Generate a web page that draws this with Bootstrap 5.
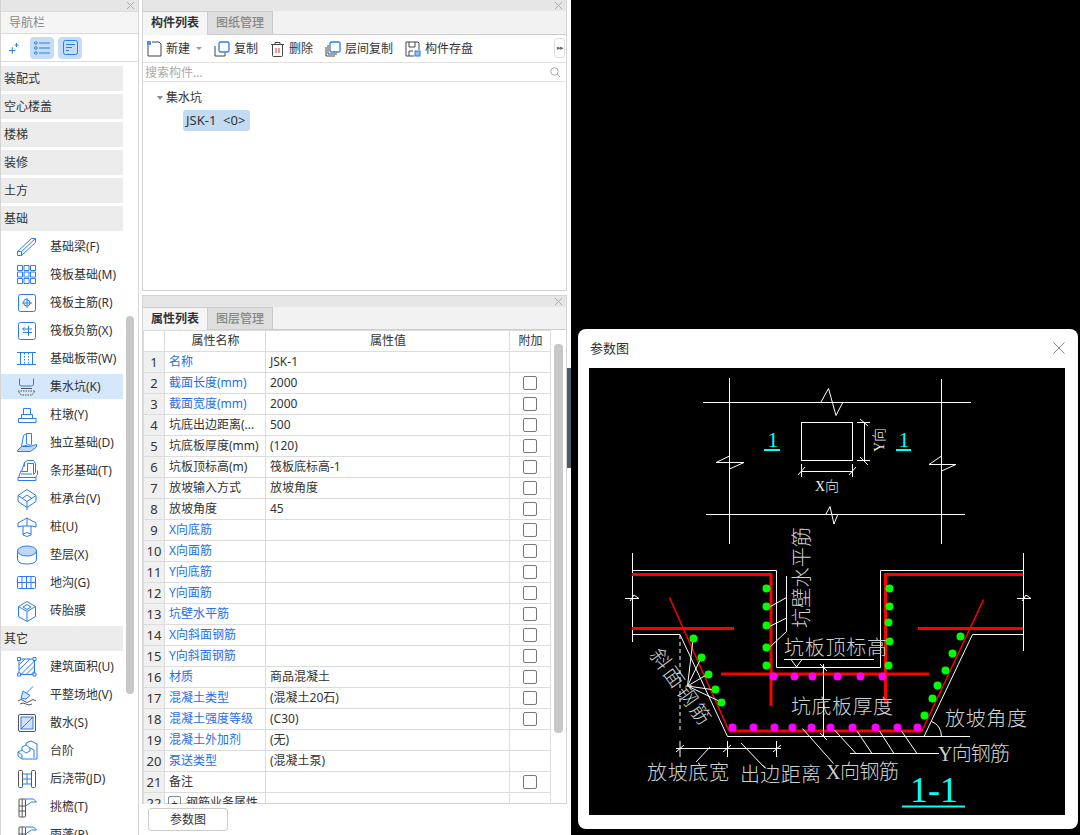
<!DOCTYPE html>
<html lang="zh-CN">
<head>
<meta charset="UTF-8">
<title>参数图</title>
<link href="https://cdn.jsdelivr.net/npm/bootstrap@5.3.0/dist/css/bootstrap.min.css" rel="stylesheet">
<script src="https://cdn.jsdelivr.net/npm/bootstrap@5.3.0/dist/js/bootstrap.bundle.min.js"></script>
<style>
html, body { height: 835px; overflow: hidden; }
body { background: #000; font-family: "Noto Sans", "Noto Sans CJK SC", sans-serif; font-size: 12px; line-height: 20px; color: #333; }
.app-shell { width: 571px; height: 835px; background: #fff; }
.nav-side { width: 139px; flex: none; border-left: 1px solid #d4d4d4; border-right: 1px solid #d4d4d4; }
.dock-bar { height: 11px; background: #e6e6e6; display: flex; justify-content: flex-end; align-items: center; padding-right: 3px; flex: none; }
.dock-bar svg { display: block; }
.nav-title { height: 23px; line-height: 22px; background: #f5f5f5; color: #888; padding-left: 8px; font-size: 12px; border-top: 1px solid #ddd; border-bottom: 1px solid #ddd; flex: none; }
.nav-tools { height: 28px; gap: 4px; padding-left: 5px; border-bottom: 1px solid #ddd; flex: none; }
.tool-toggle { width: 24px; height: 22px; display: flex; align-items: center; justify-content: center; border-radius: 4px; }
.tool-toggle.on { background: #c4dcf5; }
.nav-scroll { padding-top: 4px; }
.nav-list { width: 122px; flex: none; display: flex; flex-direction: column; gap: 3px; }
.nav-group { height: 25px; line-height: 25px; background: #ececec; padding-left: 3px; flex: none; }
.nav-link-row { height: 25px; display: flex; align-items: center; flex: none; padding-left: 14px; }
.nav-link-row svg { flex: none; margin-right: 11px; }
.nav-link-row.active-row { background: #d5e7fb; }
.nav-thumb { width: 8px; height: 378px; margin: 250px 0 0 3px; background: #c8c8c8; border-radius: 4px; flex: none; }
.dock-col { width: 425px; margin-left: 3px; flex: none; }
.dock { border: 1px solid #d4d4d4; border-top: 0; }
.dock-top { height: 291px; }
.dock-prop { height: 509px; margin-top: 4px; border-top: 1px solid #d4d4d4; }
.tab-row { height: 23px; background: #f2f2f2; border-bottom: 1px solid #ccc; flex: none; }
.tab-item { width: 65px; text-align: center; line-height: 22px; font-weight: 700; height: 23px; background: #f5f5f5; border-right: 1px solid #ccc; border-top: 1px solid #ccc; }
.tab-item.off { background: #dedede; color: #888; font-weight: 500; border-bottom: 1px solid #ccc; }
.dock-top .tab-row, .dock-top .tab-item { height: 24px; }
.comp-tools { height: 28px; padding-left: 4px; border-bottom: 1px solid #e2e2e2; position: relative; flex: none; }
.comp-tools svg { flex: none; margin-right: 4px; }
.comp-btn { display: flex; align-items: center; margin-right: 12px; white-space: nowrap; }
.comp-tools .first-btn svg { margin-right: 3px; }
.drop-caret { width: 0; height: 0; border-left: 3px solid transparent; border-right: 3px solid transparent; border-top: 3px solid #999; margin-left: 6px; }
.more-btn { position: absolute; right: 1px; top: 3px; width: 11px; height: 20px; border: 1px solid #e0e0e0; border-radius: 3px; color: #666; font-size: 7px; line-height: 18px; text-align: center; letter-spacing: -1px; }
.search-row { height: 19px; padding: 1px 5px 0 2px; border-bottom: 1px solid #e2e2e2; color: #aaa; line-height: 18px; flex: none; }
.tree-pane { padding: 6px 0 0 14px; }
.tree-caret { width: 0; height: 0; border-left: 3.5px solid transparent; border-right: 3.5px solid transparent; border-top: 4px solid #888; margin-right: 3px; }
.tree-chip { margin: 2px 0 0 26px; width: 67px; height: 21px; line-height: 21px; background: #c2daf2; border-radius: 3px; padding-left: 3px; white-space: pre; font-size: 13px; }
.prop-wrap { height: 474px; overflow: hidden; flex: none; }
.prop-body { width: 407px; flex: none; overflow: hidden; height: 474px; }
.prop-gutter { flex: 1; border-left: 1px solid #e0e0e0; }
.prop-thumb { width: 9px; height: 389px; margin: 14px 0 0 3px; background: #c8c8c8; border-radius: 4px; }
.prop-grid { table-layout: fixed; width: 407px; --bs-table-border-color: #dcdcdc; color: #333; }
.prop-grid > tbody > tr > td, .prop-grid > thead > tr > th { height: 21px; padding: 0 3px 0 4px; line-height: 20px; font-size: 12px; font-weight: 400; white-space: nowrap; overflow: hidden; vertical-align: middle; border-color: #dcdcdc; }
.prop-grid > thead > tr > th { text-align: center; }
.prop-grid > tbody > tr > td.row-no { background: #f0f0f0; text-align: center; padding: 0; font-size: 13px; }
.prop-grid > tbody > tr > td.blue-name { color: #2470e8; }
.prop-grid > tbody > tr > td.check-cell { text-align: center; padding: 0; }
.prop-check { width: 14px; height: 14px; border: 1px solid #777; border-radius: 2px; display: block; margin: 0 auto; }
.plus-box { display: inline-flex; width: 13px; height: 13px; border: 1px solid #888; border-radius: 2px; align-items: center; justify-content: center; line-height: 1; margin: 0 5px 0 -1px; font-size: 11px; }
.param-btn { width: 80px; height: 23px; margin: 4px 0 0 6px; border: 1px solid #ccc; border-radius: 3px; background: #fff; font-size: 12px; padding: 0; color: #333; line-height: 21px; }
.side-handle { position: absolute; left: 567px; top: 368px; width: 4px; height: 100px; background: #505a66; }
.param-window { position: absolute; left: 578px; top: 329px; width: 500px; height: 500px; background: #fff; border-radius: 8px; }
.param-head { height: 39px; padding: 0 13px 1px 12px; font-size: 13px; color: #333; }
.param-canvas { display: block; margin-left: 11px; background: #000; }
.cad-text { font-family: "Liberation Serif", "Noto Sans CJK SC", serif; font-weight: 300; fill: #cdd3d3; font-size: 20px; }
.cad-small { font-size: 14px; fill: #eee; }
.cad-cyan { font-family: "Liberation Serif", serif; fill: #0ff; }
</style>
</head>
<body>
<div class="app-shell d-flex">
  <div class="nav-side d-flex flex-column">
    <div class="dock-bar"><svg width="9" height="9" viewBox="0 0 9 9"><path d="M1 1l7 7M8 1L1 8" stroke="#aaa" fill="none"/></svg></div>
    <div class="nav-title">导航栏</div>
    <div class="nav-tools d-flex align-items-center">
      <svg width="16" height="16" viewBox="0 0 16 16" class="me-1"><path d="M3 10.500h6.500M6.300 7.200v6.500M8.500 5h4M10.500 3v4" stroke="#2b7de9" fill="none"/></svg>
      <div class="tool-toggle on"><svg width="16" height="14" viewBox="0 0 16 14"><circle cx="1.800" cy="2" r="1.300" fill="none" stroke="#2b7de9"/><circle cx="1.800" cy="7" r="1.300" fill="none" stroke="#2b7de9"/><circle cx="1.800" cy="12" r="1.300" fill="none" stroke="#2b7de9"/><path d="M5 2h11M5 7h11M5 12h11" stroke="#2b7de9"/></svg></div>
      <div class="tool-toggle on"><svg width="15" height="15" viewBox="0 0 15 15"><rect x=".5" y=".5" width="14" height="14" rx="2" fill="none" stroke="#2b7de9"/><path d="M3 4.500h9M3 7.500h6M3 10.500h3" stroke="#2b7de9"/></svg></div>
    </div>
    <div class="nav-scroll d-flex flex-grow-1 overflow-hidden">
      <div class="nav-list">
        <div class="nav-group">装配式</div>
        <div class="nav-group">空心楼盖</div>
        <div class="nav-group">楼梯</div>
        <div class="nav-group">装修</div>
        <div class="nav-group">土方</div>
        <div class="nav-group">基础</div>
        <div class="nav-link-row"><svg width="24" height="24" viewBox="0 0 24 24" fill="none" stroke="#2b7de9"><path d="M2.500 16.500L16.500 3.500H20.500V7.500L6.500 20.500H2.500ZM6.500 20.500V16.500L20.500 3.500M2.500 16.500H6.500"/></svg>基础梁(F)</div>
        <div class="nav-link-row"><svg width="24" height="24" viewBox="0 0 24 24" fill="none" stroke="#2b7de9"><path d="M2.500 2.500h5v5h-5zM9 2.500h5v5H9zM15.500 2.500h5v5h-5zM2.500 9h5v5h-5zM9 9h5v5H9zM15.500 9h5v5h-5zM2.500 15.500h5v5h-5zM9 15.500h5v5H9zM15.500 15.500h5v5h-5z"/></svg>筏板基础(M)</div>
        <div class="nav-link-row"><svg width="24" height="24" viewBox="0 0 24 24" fill="none" stroke="#2b7de9"><rect x="3.500" y="3.500" width="17" height="17" rx="2"/><path d="M12 7v10M12 8a3.500 3.500 0 1 0 0 7M12 9a3 3 0 1 1 0 6M7 12h10"/></svg>筏板主筋(R)</div>
        <div class="nav-link-row"><svg width="24" height="24" viewBox="0 0 24 24" fill="none" stroke="#2b7de9"><rect x="3.500" y="3.500" width="17" height="17" rx="2"/><path d="M13.500 7v10M8 10h9M8 13.500h9M9.500 8.500L7.500 10l2 1.500"/></svg>筏板负筋(X)</div>
        <div class="nav-link-row"><svg width="24" height="24" viewBox="0 0 24 24" fill="none" stroke="#2b7de9"><path d="M2 5.500h19M2 17.500h19M5.500 5.500v12M17.500 5.500v12"/><path d="M9.500 6v11M13.500 6v11" stroke-dasharray="1.500 1.500"/></svg>基础板带(W)</div>
        <div class="nav-link-row active-row"><svg width="24" height="24" viewBox="0 0 24 24" fill="none" stroke="#2b7de9"><path d="M4.500 3.500v5.500q0 2 2 2h10q2 0 2-2V3.500"/><path d="M6 13.500h11" stroke="#555"/><path d="M3 16h17l-3 4H6z" stroke="#555" stroke-dasharray="1.500 1"/></svg>集水坑(K)</div>
        <div class="nav-link-row"><svg width="24" height="24" viewBox="0 0 24 24" fill="none" stroke="#2b7de9"><path d="M8.500 5.500h7v6h-7zM6.500 11.500h11v4h-11zM3.500 15.500h17.500v4H3.500z"/></svg>柱墩(Y)</div>
        <div class="nav-link-row"><svg width="24" height="24" viewBox="0 0 24 24" fill="none" stroke="#2b7de9"><path d="M8.500 4.500l3-2h5v11l-3 2h-7z"/><path d="M11.500 3v10M6.500 15.500l8-2"/><path d="M2.500 19.500l4-4h8l7-2v2.500l-6 4.500H2.500z" fill="#bcd7f7"/></svg>独立基础(D)</div>
        <div class="nav-link-row"><svg width="24" height="24" viewBox="0 0 24 24" fill="none" stroke="#2b7de9"><path d="M9.500 3.500l3-2h6l2 3v9l-2 2v-11h-6v8h-6z"/><path d="M9.500 3.500v4M18.500 4.500h-6"/><path d="M6 11.500L3.500 18.500h17l2-3v-4"/><path d="M3 18.500h18v3H3z"/><path d="M6 15h11"/></svg>条形基础(T)</div>
        <div class="nav-link-row"><svg width="24" height="24" viewBox="0 0 24 24" fill="none" stroke="#2b7de9"><path d="M12 2.500l9 6v6l-9 6-9-6v-6zM3 8.500l9 6 9-6M12 14.500V23"/><path d="M7 11.500l5-3.500 5 3.500"/></svg>桩承台(V)</div>
        <div class="nav-link-row"><svg width="24" height="24" viewBox="0 0 24 24" fill="none" stroke="#2b7de9"><path d="M3 8l9-5 9 5v4l-4-1H7l-4 1zM12 3v8"/><path d="M8 11v9q4 3 8 0v-9M8 19q4-3 8 0"/></svg>桩(U)</div>
        <div class="nav-link-row"><svg width="24" height="24" viewBox="0 0 24 24" fill="none" stroke="#2b7de9"><ellipse cx="12" cy="8" rx="9.500" ry="5" fill="#bcd7f7"/><path d="M2.500 8v8q0 5 9.500 5t9.500-5V8"/></svg>垫层(X)</div>
        <div class="nav-link-row"><svg width="24" height="24" viewBox="0 0 24 24" fill="none" stroke="#2b7de9"><rect x="2.500" y="5.500" width="18" height="12" rx="1"/><path d="M2.500 11.500h18M7 5.500v12M11.500 5.500v12M16 5.500v12"/></svg>地沟(G)</div>
        <div class="nav-link-row"><svg width="24" height="24" viewBox="0 0 24 24" fill="none" stroke="#2b7de9"><path d="M12 2.500l8.500 5v10l-8.500 5-8.500-5v-10zM3.500 7.500l8.500 5 8.500-5M12 12.500v10"/><path d="M8 8l4-2.500L16 8l-4 2.500z"/></svg>砖胎膜</div>
        <div class="nav-group">其它</div>
        <div class="nav-link-row"><svg width="24" height="24" viewBox="0 0 24 24" fill="none" stroke="#2b7de9"><rect x="4" y="4" width="15.500" height="15.500"/><path d="M4 10l6-6M4 15l11-11M6 19.500l13.500-13.500M11 19.500l8.500-8.500M16 19.500l3.500-3.500"/><path d="M2.500 2.500h3v3h-3zM18 2.500h3v3h-3zM2.500 18h3v3h-3zM18 18h3v3h-3z" fill="#fff"/></svg>建筑面积(U)</div>
        <div class="nav-link-row"><svg width="24" height="24" viewBox="0 0 24 24" fill="none" stroke="#555"><path d="M18 3.500l-7 7" stroke="#2b7de9"/><path d="M8 8l7 4.500-4 3.500-5-.5z" fill="#d5e5fa" stroke="#2b7de9"/><path d="M3 18q3-3 6 0t6 0 6 0M5 21q3-2 6 0t6 0"/></svg>平整场地(V)</div>
        <div class="nav-link-row"><svg width="24" height="24" viewBox="0 0 24 24" fill="none" stroke="#555"><rect x="3.500" y="3.500" width="17" height="17" rx="1.500"/><rect x="6" y="6" width="12" height="12" fill="#cfe2fa" stroke="#2b7de9"/><path d="M6 18L18 6" stroke="#2b7de9"/></svg>散水(S)</div>
        <div class="nav-link-row"><svg width="24" height="24" viewBox="0 0 24 24" fill="none" stroke="#2b7de9"><path d="M3 13l4-2v-3l4-2V4l5-2 6 3v15H7l-4-3z"/><path d="M3 13l4 3v4M7 11l4 3 4-2v-3l4 2v8M11 6l4 3"/></svg>台阶</div>
        <div class="nav-link-row"><svg width="24" height="24" viewBox="0 0 24 24" fill="none" stroke="#555"><rect x="3.500" y="3.500" width="4" height="17" rx="1"/><rect x="16.500" y="3.500" width="4" height="17" rx="1"/><path d="M7.500 7h9M7.500 12h9M7.500 17h9M12 7v10" stroke="#2b7de9"/></svg>后浇带(JD)</div>
        <div class="nav-link-row"><svg width="24" height="24" viewBox="0 0 24 24" fill="none" stroke="#555"><rect x="4" y="4" width="6.500" height="18" rx="1"/><path d="M4 11h6.500M4 16h6.500M7.200 4v18"/><path d="M10.500 4h8l3 3h-5l-6 4" stroke="#2b7de9"/></svg>挑檐(T)</div>
        <div class="nav-link-row"><svg width="24" height="24" viewBox="0 0 24 24" fill="none" stroke="#555"><rect x="4" y="4" width="6.500" height="18" rx="1"/><path d="M4 11h6.500M7.200 4v18"/><path d="M10.500 4h8l3 3h-5l-6 4" stroke="#2b7de9"/></svg>雨蓬(P)</div>
      </div>
      <div class="nav-thumb"></div>
    </div>
  </div>

  <div class="dock-col d-flex flex-column">
    <div class="dock dock-top d-flex flex-column">
      <div class="dock-bar"><svg width="9" height="9" viewBox="0 0 9 9"><path d="M1 1l7 7M8 1L1 8" stroke="#aaa" fill="none"/></svg></div>
      <div class="tab-row d-flex"><div class="tab-item">构件列表</div><div class="tab-item off">图纸管理</div></div>
      <div class="comp-tools d-flex align-items-center">
        <div class="comp-btn first-btn"><svg width="16" height="16" viewBox="0 0 16 16" fill="none" stroke="#444"><path d="M1 4v11h13V3l-2-2H5"/><rect x="0" y="0" width="4" height="4" fill="#4c8fe8" stroke="none"/></svg>新建<span class="drop-caret"></span></div>
        <div class="comp-btn"><svg width="16" height="16" viewBox="0 0 16 16" fill="none"><path d="M1 5v10h10v-3" stroke="#444"/><rect x="5" y="1" width="10" height="10" rx="1.500" stroke="#2b7de9" stroke-width="1.300"/></svg>复制</div>
        <div class="comp-btn"><svg width="15" height="16" viewBox="0 0 15 16" fill="none" stroke="#444"><path d="M1 3.500h13M5 3.500V1.500h5v2M2.500 3.500v11q0 1 1 1h8q1 0 1-1v-11"/><path d="M6 7v5M9 7v5" stroke="#d33"/></svg>删除</div>
        <div class="comp-btn"><svg width="16" height="16" viewBox="0 0 16 16" fill="none"><path d="M1 6v9h9M3 4v9h9" stroke="#444"/><rect x="5" y="1" width="10" height="10" rx="1.500" stroke="#2b7de9" stroke-width="1.300"/></svg>层间复制</div>
        <div class="comp-btn"><svg width="16" height="16" viewBox="0 0 16 16" fill="none" stroke="#444"><path d="M9 15H1V1h12l1 1v7M4 1v5h6V1M4 15v-5h4"/><rect x="10" y="10" width="5" height="5" fill="#8dbbf2" stroke="#2b7de9"/></svg>构件存盘</div>
        <div class="more-btn">▸▸</div>
      </div>
      <div class="search-row d-flex align-items-center justify-content-between">搜索构件...<svg width="11" height="11" viewBox="0 0 11 11" fill="none" stroke="#aaa"><circle cx="4.500" cy="4.500" r="3.700"/><path d="M7.200 7.200L10 10"/></svg></div>
      <div class="tree-pane">
        <div class="d-flex align-items-center"><span class="tree-caret"></span>集水坑</div>
        <div class="tree-chip">JSK-1  &lt;0&gt;</div>
      </div>
    </div>

    <div class="dock dock-prop d-flex flex-column">
      <div class="dock-bar"><svg width="9" height="9" viewBox="0 0 9 9"><path d="M1 1l7 7M8 1L1 8" stroke="#aaa" fill="none"/></svg></div>
      <div class="tab-row d-flex"><div class="tab-item">属性列表</div><div class="tab-item off">图层管理</div></div>
      <div class="prop-wrap d-flex">
        <div class="prop-body">
          <table class="table table-bordered mb-0 prop-grid">
            <colgroup><col style="width:21px"><col style="width:101px"><col style="width:244px"><col style="width:41px"></colgroup>
            <thead><tr><th></th><th>属性名称</th><th>属性值</th><th>附加</th></tr></thead>
            <tbody id="propRows"></tbody>
          </table>
        </div>
        <div class="prop-gutter"><div class="prop-thumb"></div></div>
      </div>
    </div>
    <button class="param-btn" type="button">参数图</button>
  </div>
</div>
<div class="side-handle"></div>

<div class="param-window">
  <div class="param-head d-flex align-items-center justify-content-between">参数图<svg width="12" height="12" viewBox="0 0 12 12"><path d="M.5.500l11 11M11.500.500l-11 11" stroke="#888" fill="none"/></svg></div>
  <svg class="param-canvas" width="476" height="447" viewBox="589 368 476 447" fill="none" stroke="#fff" stroke-width="1">
    <!-- plan view -->
    <path d="M729.500 378V544M941.500 379V544M703 402.500H971M706 514.500H965"/>
    <path d="M821 402L828.500 388.500L836 415.500L843 402M826 514L830 506.500L834 524L838 514"/>
    <path d="M729.500 456L716 462.500H744L729.500 469M941.500 456L929 464.500H956L941.500 471"/>
    <rect x="801.500" y="422.500" width="51" height="38"/>
    <path d="M801.500 464V477M852.500 464V477M801 471.500H853M798 475L805 467M849 475L856 467"/>
    <path d="M864.500 422V461M857 422.500H870M857 460.500H870M860 419L868 426M860 457L868 465"/>
    <text class="cad-text cad-small" x="815" y="491" stroke="none">X向</text>
    <text class="cad-text cad-small" transform="translate(884 452) rotate(-90)" stroke="none">Y向</text>
    <text class="cad-cyan" x="767.500" y="447" font-size="22" stroke="none">1</text>
    <text class="cad-cyan" x="898.500" y="447" font-size="22" stroke="none">1</text>
    <path d="M764 450H780M896 450H911" stroke="#0ff" stroke-width="2"/>

    <!-- section: concrete outline -->
    <path d="M632.500 553V642M1023.500 553V651M632 570.500H776.500V667.500H880.500V570.500H1023M632 634.500H680L727.500 736.500H970M924 736.500L972.500 634.500H1023"/>
    <path d="M625 598.500H639L634 595L630 601M1017 598.500H1031L1026 595L1022 601"/>
    <path d="M680 635V733" stroke-dasharray="4 3"/>
    <path d="M729.500 544V520"/>

    <!-- rebar -->
    <g stroke="#f00" stroke-width="3">
      <path d="M632 574.500H771V706M1023 574.500H885.500V704M632 628.500H734M918 628.500H1023M721 674H929"/>
      <path d="M729 731H922"/>
      <path d="M669.500 597.500L729 731M922 731L983.500 599.500" stroke-width="1.500"/>
    </g>

    <!-- leaders -->
    <path d="M786.500 576V631.500L770.500 646.500M786.500 597.500L770.500 606.500M786.500 618L770.500 626"/>
    <path d="M784 659.500H874M791 659.500L796.500 667L802 659.500"/>
    <path d="M823.500 664V737M820 664L827 671M820 733L827 740"/>
    <path d="M676 748.500H781M680 741V757M727.500 741V757M776.500 741V757M676 752L684 745M723 752L731 745M773 752L781 745"/>
    <path d="M696 762L710 747M741 743L765 768"/>
    <path d="M802.500 728.500L833.500 763.500M834.500 730L856 753.500M857 731L872 753.500M879.500 731L894 753.500M901.500 731L917 753.500M850 753.500H939"/>
    <path d="M931.500 721.500Q941 725 941.500 736.500"/>
    <path d="M687.500 686L693 640M687.500 686L701 658M687.500 686L708 674M687.500 686L715 690M687.500 686L721 702"/>

    <!-- bars -->
    <g fill="#0f0" stroke="none">
      <circle cx="766.500" cy="588.500" r="4"/><circle cx="766.500" cy="606.500" r="4"/><circle cx="766.500" cy="625.500" r="4"/><circle cx="766.500" cy="647.500" r="4"/><circle cx="766.500" cy="665.500" r="4"/>
      <circle cx="889.500" cy="588.500" r="4"/><circle cx="889.500" cy="606.500" r="4"/><circle cx="888.500" cy="622.500" r="4"/><circle cx="889.500" cy="641.500" r="4"/><circle cx="888.500" cy="665.500" r="4"/>
      <circle cx="693.500" cy="638.500" r="4"/><circle cx="701.500" cy="657.500" r="4"/><circle cx="708.500" cy="674.500" r="4"/><circle cx="715.500" cy="689.500" r="4"/><circle cx="721.500" cy="702.500" r="4"/>
      <circle cx="960.500" cy="636.500" r="4"/><circle cx="952.500" cy="653.500" r="4"/><circle cx="945.500" cy="670.500" r="4"/><circle cx="937.500" cy="685.500" r="4"/><circle cx="932.500" cy="698.500" r="4"/><circle cx="924.500" cy="715.500" r="4"/>
    </g>
    <g fill="#f0f" stroke="none">
      <circle cx="773.500" cy="676.500" r="4"/><circle cx="794.500" cy="676.500" r="4"/><circle cx="812.500" cy="676.500" r="4"/><circle cx="837.500" cy="676.500" r="4"/><circle cx="860.500" cy="676.500" r="4"/><circle cx="882.500" cy="676.500" r="4"/>
      <circle cx="732.500" cy="727.500" r="4"/><circle cx="753.500" cy="727.500" r="4"/><circle cx="774.500" cy="727.500" r="4"/><circle cx="792.500" cy="727.500" r="4"/><circle cx="811.500" cy="727.500" r="4"/><circle cx="830.500" cy="727.500" r="4"/><circle cx="852.500" cy="727.500" r="4"/><circle cx="875.500" cy="727.500" r="4"/><circle cx="897.500" cy="727.500" r="4"/><circle cx="917.500" cy="727.500" r="4"/>
    </g>

    <!-- labels -->
    <g stroke="none">
      <text class="cad-text" transform="translate(809 628) rotate(-90)" textLength="101">坑壁水平筋</text>
      <text class="cad-text" x="784" y="655" textLength="103">坑板顶标高</text>
      <text class="cad-text" x="791" y="714" textLength="102">坑底板厚度</text>
      <text class="cad-text" x="945" y="726" textLength="82">放坡角度</text>
      <text class="cad-text" x="938" y="761" textLength="72">Y向钢筋</text>
      <text class="cad-text" x="826" y="779" textLength="73">X向钢筋</text>
      <text class="cad-text" x="740" y="782" textLength="81">出边距离</text>
      <text class="cad-text" x="647" y="780" textLength="82">放坡底宽</text>
      <text class="cad-text" transform="translate(649 655) rotate(54)" textLength="88">斜面钢筋</text>
      <text class="cad-cyan" x="910" y="802" font-size="36" textLength="48">1-1</text>
    </g>
    <path d="M902 806.500H965" stroke="#0ff" stroke-width="2"/>
  </svg>
</div>

<script>
  // [name, value, blue name?, has checkbox?]
  const rows = [
    ["名称", "JSK-1", true, false],
    ["截面长度(mm)", "2000", true, true],
    ["截面宽度(mm)", "2000", true, true],
    ["坑底出边距离(...", "500", false, true],
    ["坑底板厚度(mm)", "(120)", false, true],
    ["坑板顶标高(m)", "筏板底标高-1", false, true],
    ["放坡输入方式", "放坡角度", false, true],
    ["放坡角度", "45", false, true],
    ["X向底筋", "", true, true],
    ["X向面筋", "", true, true],
    ["Y向底筋", "", true, true],
    ["Y向面筋", "", true, true],
    ["坑壁水平筋", "", true, true],
    ["X向斜面钢筋", "", true, true],
    ["Y向斜面钢筋", "", true, true],
    ["材质", "商品混凝土", true, true],
    ["混凝土类型", "(混凝土20石)", true, true],
    ["混凝土强度等级", "(C30)", true, true],
    ["混凝土外加剂", "(无)", true, false],
    ["泵送类型", "(混凝土泵)", true, false],
    ["备注", "", false, true],
    ['<span class="plus-box">+</span>钢筋业务属性', "", false, false]
  ];
  document.getElementById("propRows").innerHTML = rows.map((r, i) =>
    `<tr><td class="row-no">${i + 1}</td><td class="${r[2] ? "blue-name" : ""}">${r[0]}</td><td>${r[1]}</td><td class="check-cell">${r[3] ? '<span class="prop-check"></span>' : ""}</td></tr>`
  ).join("");
</script>
</body>
</html>
